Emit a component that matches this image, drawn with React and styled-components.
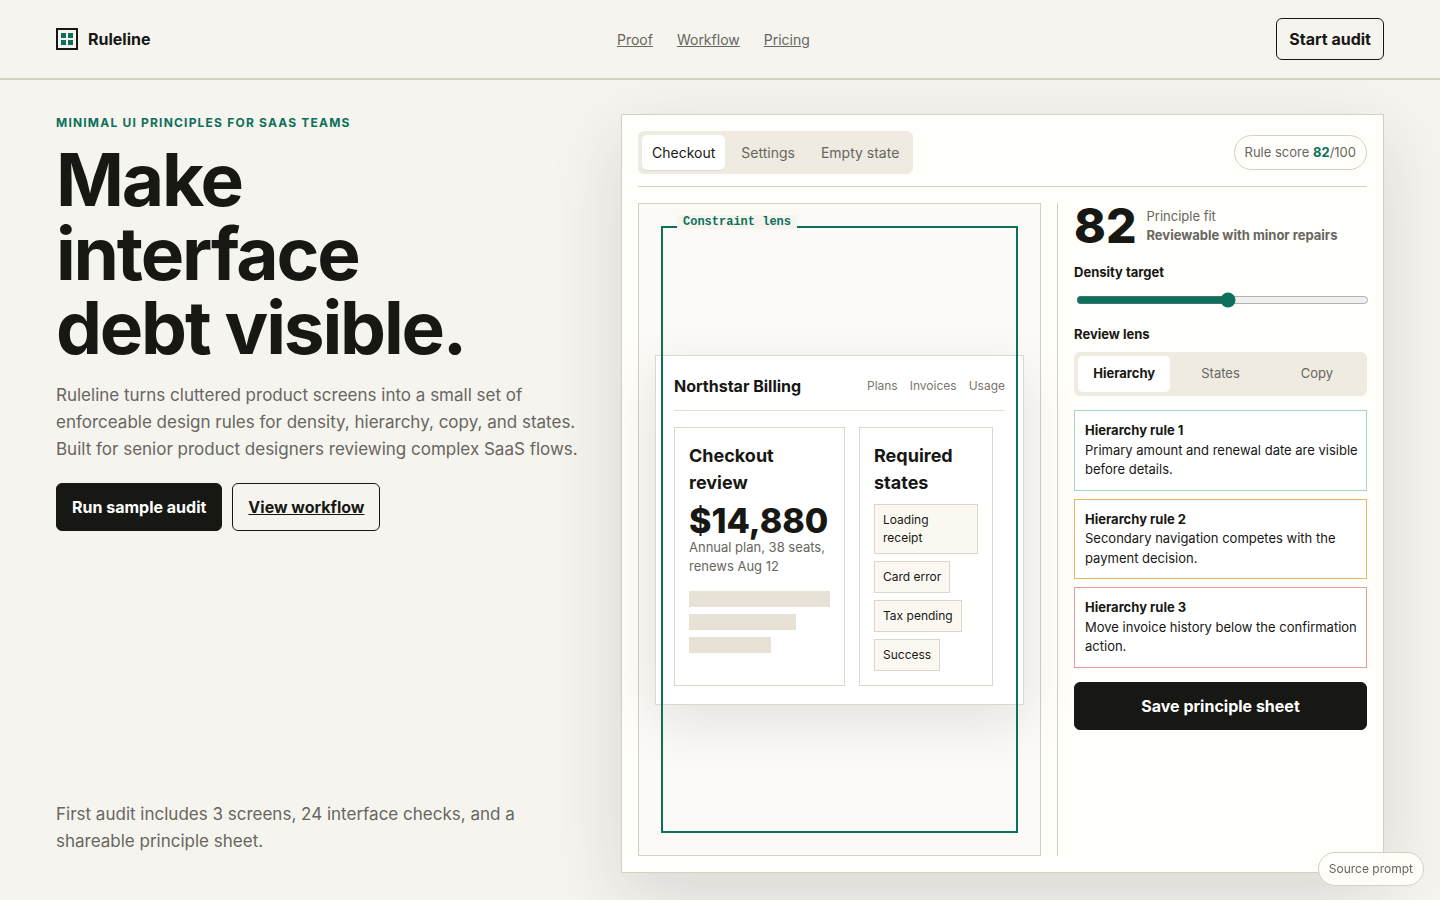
import React, { useState } from "react";
import styled, { createGlobalStyle, css } from "styled-components";

const c = {
  ink: "#171714",
  muted: "#676660",
  line: "#d6d0c2",
  paper: "#f6f4ef",
  panel: "#fffefa",
  stage: "#fbfaf7",
  soft: "#efebe1",
  green: "#0d705b",
};

const GlobalStyle = createGlobalStyle`
  *, *::before, *::after { box-sizing: border-box; }
  body {
    margin: 0;
    background: ${c.paper};
    color: ${c.ink};
    font-family: Inter, "Liberation Sans", sans-serif;
    font-size: 16px;
    line-height: 1.5;
  }
  h1, h2, h3, p, ul { margin: 0; padding: 0; }
  button, input { font: inherit; }
  button { cursor: pointer; }
`;

const Header = styled.header`
  position: relative;
  z-index: 1;
  display: flex;
  align-items: center;
  justify-content: space-between;
  min-height: 80px;
  padding: 0 56px;
  background: ${c.paper};
  border-bottom: 2px solid ${c.line};
`;

const Brand = styled.a`
  display: flex;
  align-items: center;
  gap: 10px;
  color: ${c.ink};
  font-weight: 700;
  text-decoration: none;
`;

const LogoMark = styled.span`
  display: grid;
  grid-template-columns: 5px 5px;
  gap: 2px;
  place-content: center;
  width: 22px;
  height: 22px;
  border: 2px solid ${c.ink};

  i {
    height: 5px;
    background: ${c.green};
  }
`;

const Nav = styled.nav`
  display: flex;
  gap: 24px;

  a {
    color: ${c.muted};
    font-size: 14px;
  }
`;

const buttonLook = css`
  display: inline-flex;
  align-items: center;
  justify-content: center;
  min-height: ${(p) => (p.$compact ? 42 : 48)}px;
  padding: 0 ${(p) => (p.$compact ? 12 : 15)}px;
  border: 1px solid ${c.ink};
  border-radius: 6px;
  background: ${(p) => (p.$solid ? c.ink : "transparent")};
  color: ${(p) => (p.$solid ? "#fff" : c.ink)};
  font-weight: 700;
  white-space: nowrap;
`;
const Button = styled.button`${buttonLook}`;
const ButtonLink = styled.a`${buttonLook}`;

const Main = styled.main`
  display: grid;
  grid-template-columns: minmax(0, 541fr) minmax(0, 763fr);
  gap: 24px;
  min-height: calc(100vh - 80px);
  padding: 34px 56px 27px;
`;

const Hero = styled.section`
  display: flex;
  flex-direction: column;
  align-items: flex-start;
  padding-bottom: 18px;
`;

const Eyebrow = styled.p`
  color: ${c.green};
  font-size: 12px;
  font-weight: 700;
  letter-spacing: 0.1em;
  text-transform: uppercase;
`;

const Headline = styled.h1`
  max-width: 440px;
  margin-top: 11px;
  font-size: 73px;
  font-weight: 700;
  line-height: 74px;
  letter-spacing: -0.03em;
`;

const Lead = styled.p`
  margin-top: 17px;
  color: ${c.muted};
  font-size: 17px;
  line-height: 27px;
`;

const Actions = styled.div`
  display: flex;
  gap: 10px;
  margin-top: 20px;
`;

const Footnote = styled(Lead)`
  max-width: 480px;
  margin-top: auto;
`;

const Panel = styled.section`
  display: flex;
  flex-direction: column;
  gap: 16px;
  padding: 16px;
  background: ${c.panel};
  border: 1px solid ${c.line};
  box-shadow: 0 24px 70px rgba(23, 23, 20, 0.13);
`;

const Toolbar = styled.div`
  display: flex;
  align-items: center;
  justify-content: space-between;
  padding-bottom: 12px;
  border-bottom: 1px solid ${c.line};
`;

const Tabs = styled.div`
  display: flex;
  gap: 6px;
  padding: 4px;
  border-radius: 6px;
  background: ${c.soft};
`;

const Tab = styled.button`
  padding: 7px 10px;
  border: 0;
  border-radius: 5px;
  background: ${(p) => (p.$on ? "#fff" : "transparent")};
  box-shadow: ${(p) => (p.$on ? "0 1px 1px rgba(23, 23, 20, 0.08)" : "none")};
  color: ${(p) => (p.$on ? c.ink : c.muted)};
  font-size: 14px;
  line-height: 21px;
`;

const ScorePill = styled.div`
  padding: 7px 10px;
  border: 1px solid ${c.line};
  border-radius: 18px;
  color: ${c.muted};
  font-size: 13px;
  line-height: 19px;

  strong { color: ${c.green}; }
`;

const Workspace = styled.div`
  display: grid;
  flex: 1;
  grid-template-columns: minmax(0, 1.3fr) minmax(0, 1fr);
  gap: 16px;
`;

const Stage = styled.div`
  position: relative;
  display: grid;
  align-items: center;
  padding: 16px;
  background: ${c.stage};
  border: 1px solid ${c.line};
`;

const Lens = styled.div`
  position: absolute;
  inset: 22px;
  border: 2px solid ${c.green};
  pointer-events: none;

  span {
    position: absolute;
    top: -13px;
    left: 14px;
    padding: 0 6px;
    background: ${c.paper};
    color: ${c.green};
    font-family: "Liberation Mono", monospace;
    font-size: 12px;
    font-weight: 700;
    line-height: 14px;
  }
`;

const Mock = styled.article`
  padding: 18px;
  background: #fff;
  border: 1px solid #dcd8cf;
  box-shadow: 0 18px 50px rgba(23, 23, 20, 0.1);
`;

const MockHeader = styled.div`
  display: flex;
  align-items: center;
  justify-content: space-between;
  padding-bottom: 12px;
  border-bottom: 1px solid #e8dfd0;
`;

const MockMenu = styled.div`
  display: flex;
  gap: 12px;
  color: #7a766d;
  font-size: 12px;
`;

const MockGrid = styled.div`
  display: grid;
  grid-template-columns: 171fr 134fr;
  gap: 14px;
  margin-top: 16px;
  padding-right: 12px;
`;

const Card = styled.section`
  min-width: 0;
  padding: 14px;
  border: 1px solid #ded7c9;

  h3 {
    font-size: 18px;
    font-weight: 700;
    line-height: 27px;
  }
`;

const Price = styled.div`
  margin-top: 8px;
  font-size: 34px;
  font-weight: 800;
  line-height: 34px;
`;

const PlanNote = styled.p`
  color: ${c.muted};
  font-size: 13px;
  line-height: 19px;
`;

const Bars = styled.div`
  display: grid;
  gap: 7px;
  margin-top: 15px;
`;

const Bar = styled.div`
  width: ${(p) => p.$size}%;
  height: 16px;
  background: #e8e1d6;
`;

const Chips = styled.ul`
  display: grid;
  justify-items: start;
  gap: 7px;
  margin-top: 8px;
  list-style: none;
`;

const Chip = styled.li`
  padding: 6px 8px;
  border: 1px solid #ddd5c7;
  background: #fbf8f2;
  font-size: 12px;
  line-height: 18px;
`;

const Inspector = styled.aside`
  display: flex;
  flex-direction: column;
  gap: 14px;
  padding-left: 16px;
  border-left: 1px solid ${c.line};
`;

const Score = styled.div`
  display: flex;
  align-items: center;
  gap: 10px;
  color: ${c.muted};
  font-size: 13px;
  line-height: 19px;

  b {
    color: ${c.ink};
    font-size: 48px;
    font-weight: 800;
    line-height: 45px;
  }
  strong { display: block; }
`;

const Field = styled.div`
  display: grid;
  gap: 8px;
  font-size: 13px;

  label, h2 {
    font-size: 13px;
    font-weight: 700;
    line-height: 20px;
  }
`;

const Range = styled.input`
  width: 100%;
  height: 16px;
  margin: 2px;
  accent-color: ${c.green};
`;

const Segments = styled.div`
  display: grid;
  grid-template-columns: repeat(3, 1fr);
  gap: 4px;
  padding: 4px;
  border-radius: 6px;
  background: ${c.soft};
`;

const Segment = styled.button`
  height: 36px;
  padding: 0;
  border: 0;
  border-radius: 5px;
  background: ${(p) => (p.$on ? "#fff" : "transparent")};
  color: ${(p) => (p.$on ? c.ink : c.muted)};
  font-size: 13px;
  font-weight: ${(p) => (p.$on ? 700 : 400)};
`;

const Rules = styled.ul`
  display: grid;
  gap: 8px;
  list-style: none;
`;

const Rule = styled.li`
  padding: 10px 4px 10px 10px;
  border: 1px solid ${(p) => p.$tone};
  background: #fff;
  font-size: 13px;
  line-height: 1.5;

  strong { display: block; }
`;

const SourceLink = styled.button`
  position: fixed;
  right: 16px;
  bottom: 14px;
  z-index: 2;
  padding: 7px 10px;
  border: 1px solid ${c.line};
  border-radius: 17px;
  background: rgba(255, 254, 250, 0.92);
  color: ${c.muted};
  font-size: 12px;
  line-height: 18px;
`;

const screens = ["Checkout", "Settings", "Empty state"];
const lenses = ["Hierarchy", "States", "Copy"];
const rules = [
  ["#a5d6c6", "Primary amount and renewal date are visible before details."],
  ["#e6b860", "Secondary navigation competes with the payment decision."],
  ["#e39d94", "Move invoice history below the confirmation action."],
];

export default function App() {
  const [screen, setScreen] = useState("Checkout");
  const [lens, setLens] = useState("Hierarchy");
  const [density, setDensity] = useState(52);

  return (
    <>
      <GlobalStyle />
      <Header>
        <Brand href="#top">
          <LogoMark aria-hidden="true"><i /><i /><i /><i /></LogoMark>
          Ruleline
        </Brand>
        <Nav>
          <a href="#proof">Proof</a>
          <a href="#workflow">Workflow</a>
          <a href="#pricing">Pricing</a>
        </Nav>
        <Button $compact>Start audit</Button>
      </Header>

      <Main>
        <Hero>
          <Eyebrow>Minimal UI principles for SaaS teams</Eyebrow>
          <Headline>Make interface debt visible.</Headline>
          <Lead>
            Ruleline turns cluttered product screens into a small set of enforceable design
            rules for density, hierarchy, copy, and states. Built for senior product designers
            reviewing complex SaaS flows.
          </Lead>
          <Actions>
            <Button $solid>Run sample audit</Button>
            <ButtonLink href="#workflow">View workflow</ButtonLink>
          </Actions>
          <Footnote>
            First audit includes 3 screens, 24 interface checks, and a shareable principle sheet.
          </Footnote>
        </Hero>

        <Panel>
          <Toolbar>
            <Tabs>
              {screens.map((s) => (
                <Tab key={s} $on={s === screen} onClick={() => setScreen(s)}>{s}</Tab>
              ))}
            </Tabs>
            <ScorePill>Rule score <strong>82</strong>/100</ScorePill>
          </Toolbar>

          <Workspace>
            <Stage>
              <Mock>
                <MockHeader>
                  <strong>Northstar Billing</strong>
                  <MockMenu><span>Plans</span><span>Invoices</span><span>Usage</span></MockMenu>
                </MockHeader>
                <MockGrid>
                  <Card>
                    <h3>Checkout review</h3>
                    <Price>$14,880</Price>
                    <PlanNote>Annual plan, 38 seats, renews Aug 12</PlanNote>
                    <Bars><Bar $size={100} /><Bar $size={76} /><Bar $size={58} /></Bars>
                  </Card>
                  <Card>
                    <h3>Required states</h3>
                    <Chips>
                      <Chip>Loading receipt</Chip>
                      <Chip>Card error</Chip>
                      <Chip>Tax pending</Chip>
                      <Chip>Success</Chip>
                    </Chips>
                  </Card>
                </MockGrid>
              </Mock>
              <Lens><span>Constraint lens</span></Lens>
            </Stage>

            <Inspector>
              <Score>
                <b>82</b>
                <div>Principle fit<strong>Reviewable with minor repairs</strong></div>
              </Score>
              <Field>
                <label htmlFor="density">Density target</label>
                <Range
                  id="density"
                  type="range"
                  min="0"
                  max="100"
                  value={density}
                  onChange={(e) => setDensity(Number(e.target.value))}
                />
              </Field>
              <Field>
                <h2>Review lens</h2>
                <Segments>
                  {lenses.map((l) => (
                    <Segment key={l} $on={l === lens} onClick={() => setLens(l)}>{l}</Segment>
                  ))}
                </Segments>
              </Field>
              <Rules>
                {rules.map(([tone, text], i) => (
                  <Rule key={text} $tone={tone}>
                    <strong>Hierarchy rule {i + 1}</strong>
                    {text}
                  </Rule>
                ))}
              </Rules>
              <Button $solid>Save principle sheet</Button>
            </Inspector>
          </Workspace>
        </Panel>
      </Main>
      <SourceLink>Source prompt</SourceLink>
    </>
  );
}
